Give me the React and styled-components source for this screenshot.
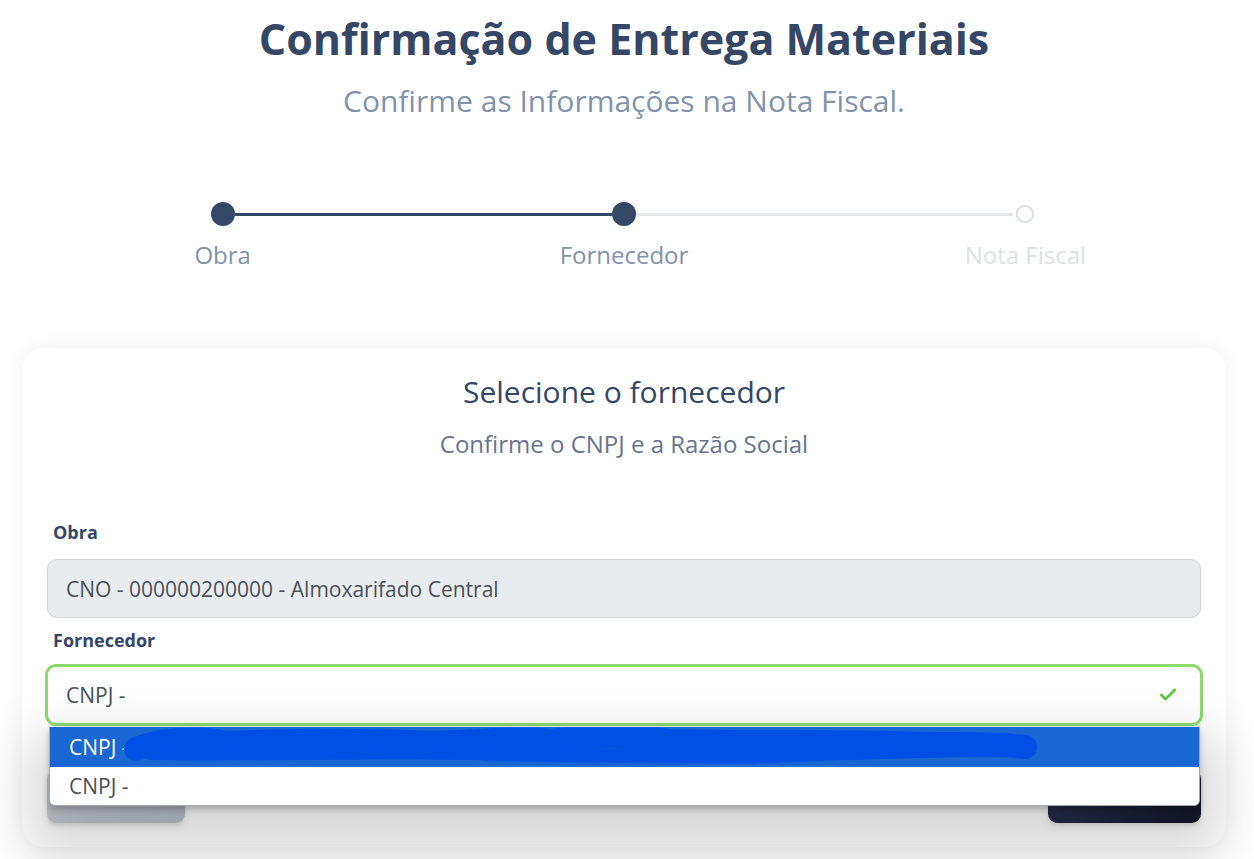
import React from 'react';
import styled, {createGlobalStyle} from 'styled-components';
import {Check} from 'lucide-react';

const GlobalStyle = createGlobalStyle`
    body {
        margin: 0;
        background: #ffffff;
        font-family: "Open Sans", "Liberation Sans", sans-serif;
    }
`;

// Styled
const Page = styled.div`
    padding: 12px 28px 12px 22px;
`;
const Title = styled.h1`
    margin: 0;
    text-align: center;
    font-size: 43px;
    line-height: 53px;
    font-weight: 700;
    color: #344767;
`;
const Subtitle = styled.p`
    margin: 16px 0 0;
    text-align: center;
    font-size: 30px;
    line-height: 40px;
    color: #8392ab;
`;
const Stepper = styled.div`
    margin-top: 81px;
`;
const DotsRow = styled.div`
    display: flex;
    align-items: center;
    padding: 0 calc(100% / 6 - 12px);
`;
const Dot = styled.span`
    width: 24px;
    height: 24px;
    border-radius: 50%;
    box-sizing: border-box;
    flex: none;
    background: ${props => props.done ? '#344767' : '#ffffff'};
    border: ${props => props.done ? 'none' : '3px solid #dee2e6'};
    transform: ${props => props.done ? 'none' : 'scale(.78)'};
`;
const Line = styled.span`
    flex: 1;
    height: 3px;
    background: ${props => props.done ? '#344767' : '#e3e6ea'};
`;
const LabelsRow = styled.div`
    display: grid;
    grid-template-columns: repeat(3, 1fr);
    margin-top: 13px;
`;
const StepLabel = styled.span`
    text-align: center;
    font-size: 24px;
    line-height: 32px;
    color: ${props => props.muted ? '#dee2e6' : '#8392ab'};
`;
const Card = styled.div`
    margin-top: 77px;
    background: #ffffff;
    border-radius: 22px;
    box-shadow: 0 0 24px rgba(0, 0, 0, .06);
    padding: 24px 25px 24px;
`;
const CardTitle = styled.h2`
    margin: 0;
    text-align: center;
    font-size: 30px;
    line-height: 40px;
    font-weight: 400;
    color: #344767;
`;
const CardSubtitle = styled.p`
    margin: 16px 0 0;
    text-align: center;
    font-size: 24px;
    line-height: 32px;
    color: #67748e;
`;
const FieldLabel = styled.label`
    display: block;
    padding-left: 6px;
    margin-top: ${props => props.first ? '60px' : '10px'};
    margin-bottom: ${props => props.first ? '15px' : '12px'};
    font-size: 18px;
    line-height: 24px;
    font-weight: 700;
    color: #344767;
`;
const ReadInput = styled.div`
    height: 59px;
    box-sizing: border-box;
    display: flex;
    align-items: center;
    padding: 0 18px;
    background: #e9ecef;
    border: 1px solid #d2d6da;
    border-radius: 10px;
    font-size: 21px;
    color: #495057;
`;
const SelectWrap = styled.div`
    position: relative;
    margin: 0 -2px;
`;
const SelectBox = styled.div`
    height: 62px;
    box-sizing: border-box;
    display: flex;
    align-items: center;
    justify-content: space-between;
    padding: 0 22px 0 18px;
    background: #ffffff;
    border: 3px solid #8bdb6c;
    border-radius: 11px;
    font-size: 21px;
    color: #495057;
`;
const Menu = styled.div`
    position: absolute;
    top: 100%;
    left: 4px;
    right: 3px;
    margin-top: 1px;
    z-index: 2;
    background: #ffffff;
    border: 1px solid #a7a7a7;
    border-top: none;
    border-radius: 0 0 6px 6px;
    overflow: hidden;
    box-shadow: 0 4px 6px rgba(0, 0, 0, .22), 0 30px 50px 22px rgba(0, 0, 0, .15);
`;
const Option = styled.div`
    position: relative;
    height: ${props => props.active ? '40px' : '38px'};
    display: flex;
    align-items: center;
    padding-left: 19px;
    font-size: 21px;
    background: ${props => props.active ? '#1967d2' : '#ffffff'};
    color: ${props => props.active ? '#ffffff' : '#495057'};
`;
const Scribble = styled.svg`
    position: absolute;
    left: 0;
    top: 0;
    pointer-events: none;
`;
const Actions = styled.div`
    display: flex;
    justify-content: space-between;
    margin-top: 44px;
`;
const Button = styled.button`
    height: 53px;
    border: none;
    border-radius: 9px;
    font-family: inherit;
    font-size: 16px;
    font-weight: 700;
    color: #ffffff;
    width: ${props => props.dark ? '153px' : '138px'};
    background: ${props => props.dark
        ? 'linear-gradient(310deg, #141727, #2b3055)'
        : 'linear-gradient(310deg, #b7bdc6, #c9ced5)'};
    box-shadow: 0 4px 7px -1px rgba(0, 0, 0, .11), 0 2px 4px -1px rgba(0, 0, 0, .07);
`;

const steps = [
    {label: 'Obra', done: true},
    {label: 'Fornecedor', done: true},
    {label: 'Nota Fiscal', done: false},
];

const App = () => (
    <Page>
        <GlobalStyle/>
        <Title>Confirmação de Entrega Materiais</Title>
        <Subtitle>Confirme as Informações na Nota Fiscal.</Subtitle>

        <Stepper>
            <DotsRow>
                <Dot done/>
                <Line done/>
                <Dot done/>
                <Line/>
                <Dot/>
            </DotsRow>
            <LabelsRow>
                {steps.map(s => <StepLabel key={s.label} muted={!s.done}>{s.label}</StepLabel>)}
            </LabelsRow>
        </Stepper>

        <Card>
            <CardTitle>Selecione o fornecedor</CardTitle>
            <CardSubtitle>Confirme o CNPJ e a Razão Social</CardSubtitle>

            <FieldLabel first>Obra</FieldLabel>
            <ReadInput>CNO - 000000200000 - Almoxarifado Central</ReadInput>

            <FieldLabel>Fornecedor</FieldLabel>
            <SelectWrap>
                <SelectBox>
                    <span>CNPJ -</span>
                    <Check size={20} strokeWidth={3.2} color="#5fc93a"/>
                </SelectBox>
                <Menu>
                    <Option active>
                        CNPJ -
                        {/* redaction scribble */}
                        <Scribble width="1000" height="40" viewBox="0 0 1000 40">
                            <path
                                d="M86 22 C 110 12, 150 10, 175 16 C 230 14, 300 12, 380 16 C 440 14, 470 10, 500 14 C 540 8, 580 8, 620 14 C 700 16, 760 14, 840 16 C 900 18, 950 16, 975 20"
                                stroke="#0050e6" strokeWidth="24" strokeLinecap="round" fill="none"/>
                            <path
                                d="M100 26 C 200 28, 300 24, 420 26 C 520 30, 600 28, 700 30 C 780 26, 860 24, 960 22"
                                stroke="#0050e6" strokeWidth="14" strokeLinecap="round" fill="none"/>
                        </Scribble>
                    </Option>
                    <Option>CNPJ -</Option>
                </Menu>
            </SelectWrap>

            <Actions>
                <Button>Voltar</Button>
                <Button dark>Próximo</Button>
            </Actions>
        </Card>
    </Page>
);

export default App;
